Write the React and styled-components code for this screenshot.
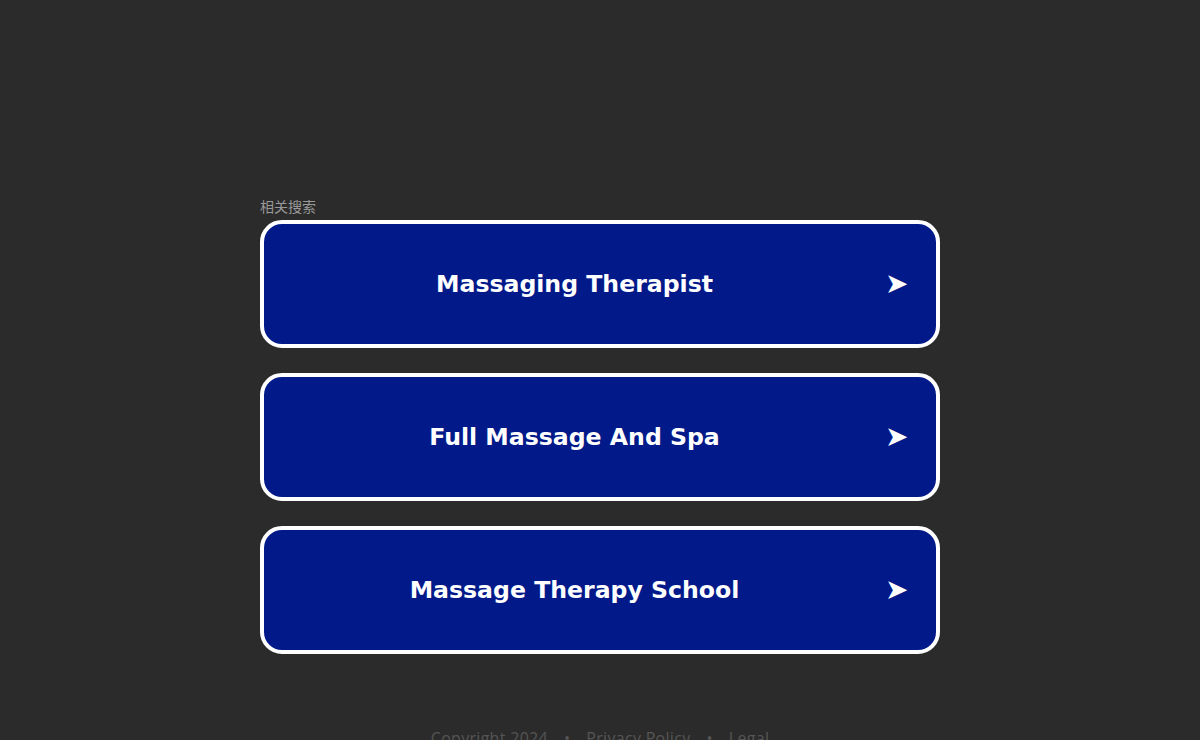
import React from 'react';
import styled, { createGlobalStyle } from 'styled-components';

const Global = createGlobalStyle`
  html, body {
    margin: 0;
    padding: 0;
    background: #2b2b2b;
    height: 100%;
    overflow: hidden;
  }
`;

const Page = styled.div`
  width: 1200px;
  height: 740px;
  display: flex;
  flex-direction: column;
  align-items: center;
  padding-top: 196px;
  box-sizing: border-box;
`;

const Block = styled.div`
  width: 680px;
  display: flex;
  flex-direction: column;
`;

const Label = styled.div`
  font-family: "Noto Sans CJK SC", "Noto Sans", sans-serif;
  font-size: 14px;
  line-height: 20px;
  color: #999;
  margin-bottom: 4px;
`;

const List = styled.div`
  display: flex;
  flex-direction: column;
  gap: 25px;
`;

const Card = styled.a`
  height: 128px;
  box-sizing: border-box;
  border: 4px solid #fff;
  border-radius: 22px;
  background: #011989;
  display: flex;
  align-items: center;
  text-decoration: none;
  cursor: pointer;
`;

const Title = styled.span`
  flex: 1;
  text-align: center;
  font-family: "DejaVu Sans", Verdana, sans-serif;
  font-weight: bold;
  font-size: 23.6px;
  color: #fff;
`;

const Arrow = styled.span`
  width: 51px;
  font-family: "DejaVu Sans", sans-serif;
  font-size: 28px;
  line-height: 1;
  color: #fff;
`;

const Footer = styled.div`
  margin-top: 73px;
  font-family: "Open Sans", sans-serif;
  font-size: 16px;
  letter-spacing: 0.3px;
  color: #555;
  display: flex;
  gap: 16px;
`;

const items = ['Massaging Therapist', 'Full Massage And Spa', 'Massage Therapy School'];

export default function App() {
  return (
    <Page>
      <Global />
      <Block>
        <Label>相关搜索</Label>
        <List>
          {items.map((t) => (
            <Card key={t}>
              <Title>{t}</Title>
              <Arrow>➤</Arrow>
            </Card>
          ))}
        </List>
      </Block>
      <Footer>
        <span>Copyright 2024</span>
        <span>•</span>
        <span>Privacy Policy</span>
        <span>•</span>
        <span>Legal</span>
      </Footer>
    </Page>
  );
}
